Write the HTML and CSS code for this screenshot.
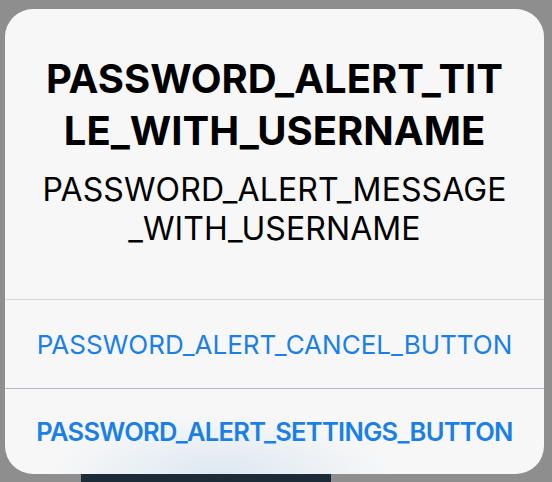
FILE: index.html
```html
<!DOCTYPE html>
<html lang="en">
<head>
    <meta charset="UTF-8">
    <title>Password alert</title>
    <link rel="stylesheet" href="styles.css">
</head>
<body>
    <div class="alert">
        <div class="alert-body">
            <h1 class="alert-title">PASSWORD_ALERT_TIT<br>LE_WITH_USERNAME</h1>
            <p class="alert-message">PASSWORD_ALERT_MESSAGE<br>_WITH_USERNAME</p>
        </div>
        <button class="alert-btn cancel">PASSWORD_ALERT_CANCEL_BUTTON</button>
        <button class="alert-btn settings">PASSWORD_ALERT_SETTINGS_BUTTON</button>
    </div>
    <div class="behind"></div>
</body>
</html>
```

FILE: styles.css
```css
body { margin: 0; background: #8e8e8e; font-family: Inter, "Noto Sans", sans-serif; height: 482px; overflow: hidden; }
.alert { margin: 9px 0 0 5px; width: 539px; height: 465px; background: #f7f7f8; border-radius: 28px; overflow: hidden; display: flex; flex-direction: column; }
.alert-body { height: 290px; box-sizing: border-box; padding-top: 44px; text-align: center; }
.alert-title { margin: 0; font-size: 40px; line-height: 52px; font-weight: 700; color: #000; letter-spacing: 0; }
.alert-message { margin: 13px 0 0; font-size: 32px; line-height: 39px; font-weight: 400; color: #000; letter-spacing: 0.1px; }
.alert-btn { border: none; border-top: 1px solid #d6d6d8; background: transparent; font-family: inherit; color: #1a7fe6; font-size: 26px; padding: 0; width: 100%; text-align: center; }
.cancel { height: 89px; font-weight: 400; }
.settings { flex: 1; font-size: 25.5px; font-weight: 600; letter-spacing: -0.7px; border-top-color: #b6bac2; background: radial-gradient(ellipse 170px 60px at 40% 100%, rgba(190, 214, 232, 0.45), rgba(247, 247, 248, 0)); }
.behind { margin-left: 81px; width: 250px; height: 8px; background: #1d2a38; }
```
